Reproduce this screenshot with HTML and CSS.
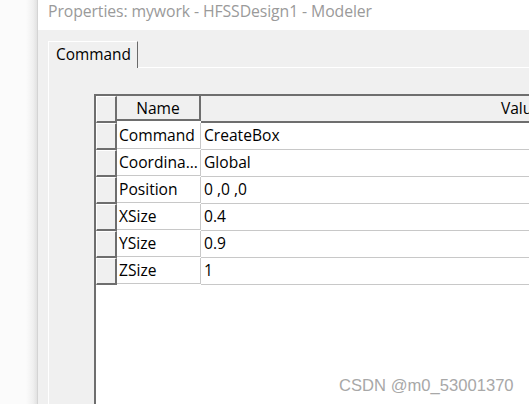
FILE: index.html
```html
<!DOCTYPE html>
<html>
<head>
<meta charset="utf-8">
<link rel="stylesheet" href="styles.css">
</head>
<body>
<div class="desk"></div>
<div class="window">
  <div class="titlebar">Properties: mywork - HFSSDesign1 - Modeler</div>
  <div class="client">
    <div class="tabs"><div class="tab">Command</div><div class="tabline"></div></div>
    <div class="panel">
      <div class="grid">
        <div class="row head">
          <div class="rh"></div>
          <div class="c name">Name</div>
          <div class="c val">Value</div>
        </div>
        <div class="row"><div class="rh"></div><div class="c name">Command</div><div class="c val">CreateBox</div></div>
        <div class="row"><div class="rh"></div><div class="c name">Coordina...</div><div class="c val">Global</div></div>
        <div class="row"><div class="rh"></div><div class="c name">Position</div><div class="c val">0 ,0 ,0</div></div>
        <div class="row"><div class="rh"></div><div class="c name">XSize</div><div class="c val">0.4</div></div>
        <div class="row"><div class="rh"></div><div class="c name">YSize</div><div class="c val">0.9</div></div>
        <div class="row"><div class="rh"></div><div class="c name">ZSize</div><div class="c val">1</div></div>
        <div class="fill"></div>
      </div>
    </div>
  </div>
</div>
<div class="watermark">CSDN @m0_53001370</div>
</body>
</html>
```
FILE: styles.css
```css
html, body {
  margin: 0;
  padding: 0;
  width: 529px;
  height: 404px;
  overflow: hidden;
}
body {
  display: flex;
  background: #fff;
  font-family: "Open Sans", "Noto Sans", sans-serif;
  position: relative;
}
.desk {
  width: 37px;
  flex: none;
  background: linear-gradient(to right, #fbfbfb 0, #fbfbfb 26px, #f0f0f0 33px, #e2e2e2 37px);
}
.window {
  flex: 1;
  display: flex;
  flex-direction: column;
  border-left: 1px solid #d4d4d4;
  min-width: 0;
}
.titlebar {
  height: 30px;
  flex: none;
  box-sizing: border-box;
  background: #fff;
  color: #9a9a9a;
  font-size: 15.8px;
  line-height: 22px;
  padding: 0 0 0 10px;
  white-space: nowrap;
  letter-spacing: -0.1px;
}
.client {
  flex: 1;
  background: #f0f0f0;
  padding: 11px 0 0 10px;
  display: flex;
  flex-direction: column;
}
.tabs {
  display: flex;
  height: 27px;
  flex: none;
}
.tab {
  width: 90px;
  border-top: 1px solid #fff;
  border-left: 1px solid #fff;
  border-right: 1px solid #6a6a6a;
  font-size: 15.4px;
  color: #000;
  line-height: 25px;
  padding-left: 7px;
  box-sizing: border-box;
  height: 27px;
  white-space: nowrap;
}
.tabline {
  flex: 1;
  border-bottom: 1px solid #fff;
}
.panel {
  flex: 1;
  border-left: 1px solid #fff;
  padding: 26px 0 0 45px;
  display: flex;
  min-height: 0;
}
.grid {
  flex: 1;
  border-left: 2px solid #6e6e6e;
  border-top: 2px solid #6e6e6e;
  background: #fff;
  display: flex;
  flex-direction: column;
  font-size: 15.6px;
  color: #000;
  overflow: hidden;
}
.row {
  display: flex;
  height: 27px;
  flex: none;
}
.rh {
  width: 18px;
  flex: none;
  background: #f0f0f0;
  border-top: 1px solid #fff;
  border-left: 1px solid #fff;
  border-right: 2px solid #6e6e6e;
  border-bottom: 2px solid #6e6e6e;
  box-sizing: content-box;
  height: 24px;
}
.c {
  height: 26px;
  line-height: 25px;
  border-bottom: 1px solid #c8c8c8;
  white-space: nowrap;
  overflow: hidden;
}
.name {
  flex: none;
  border-right: 1px solid #c8c8c8;
  padding-left: 2px;
  box-sizing: border-box;
  width: 84px;
}
.val {
  width: 640px;
  flex: none;
  padding-left: 3px;
}
.head .rh {
  height: 24px;
}
.head .c {
  background: #f0f0f0;
  border-bottom: 2px solid #6e6e6e;
  height: 25px;
  text-align: center;
  line-height: 25px;
}
.head .name {
  border-right: 2px solid #6e6e6e;
  padding-left: 0;
}
.head .val {
  padding-left: 0;
}
.fill {
  flex: 1;
}
.watermark {
  position: absolute;
  left: 339px;
  top: 376px;
  font-family: "Liberation Sans", Arial, sans-serif;
  font-size: 16.6px;
  color: #a8a8a8;
  text-shadow: 0 0 2px #fff, 0 0 2px #fff;
}
```
